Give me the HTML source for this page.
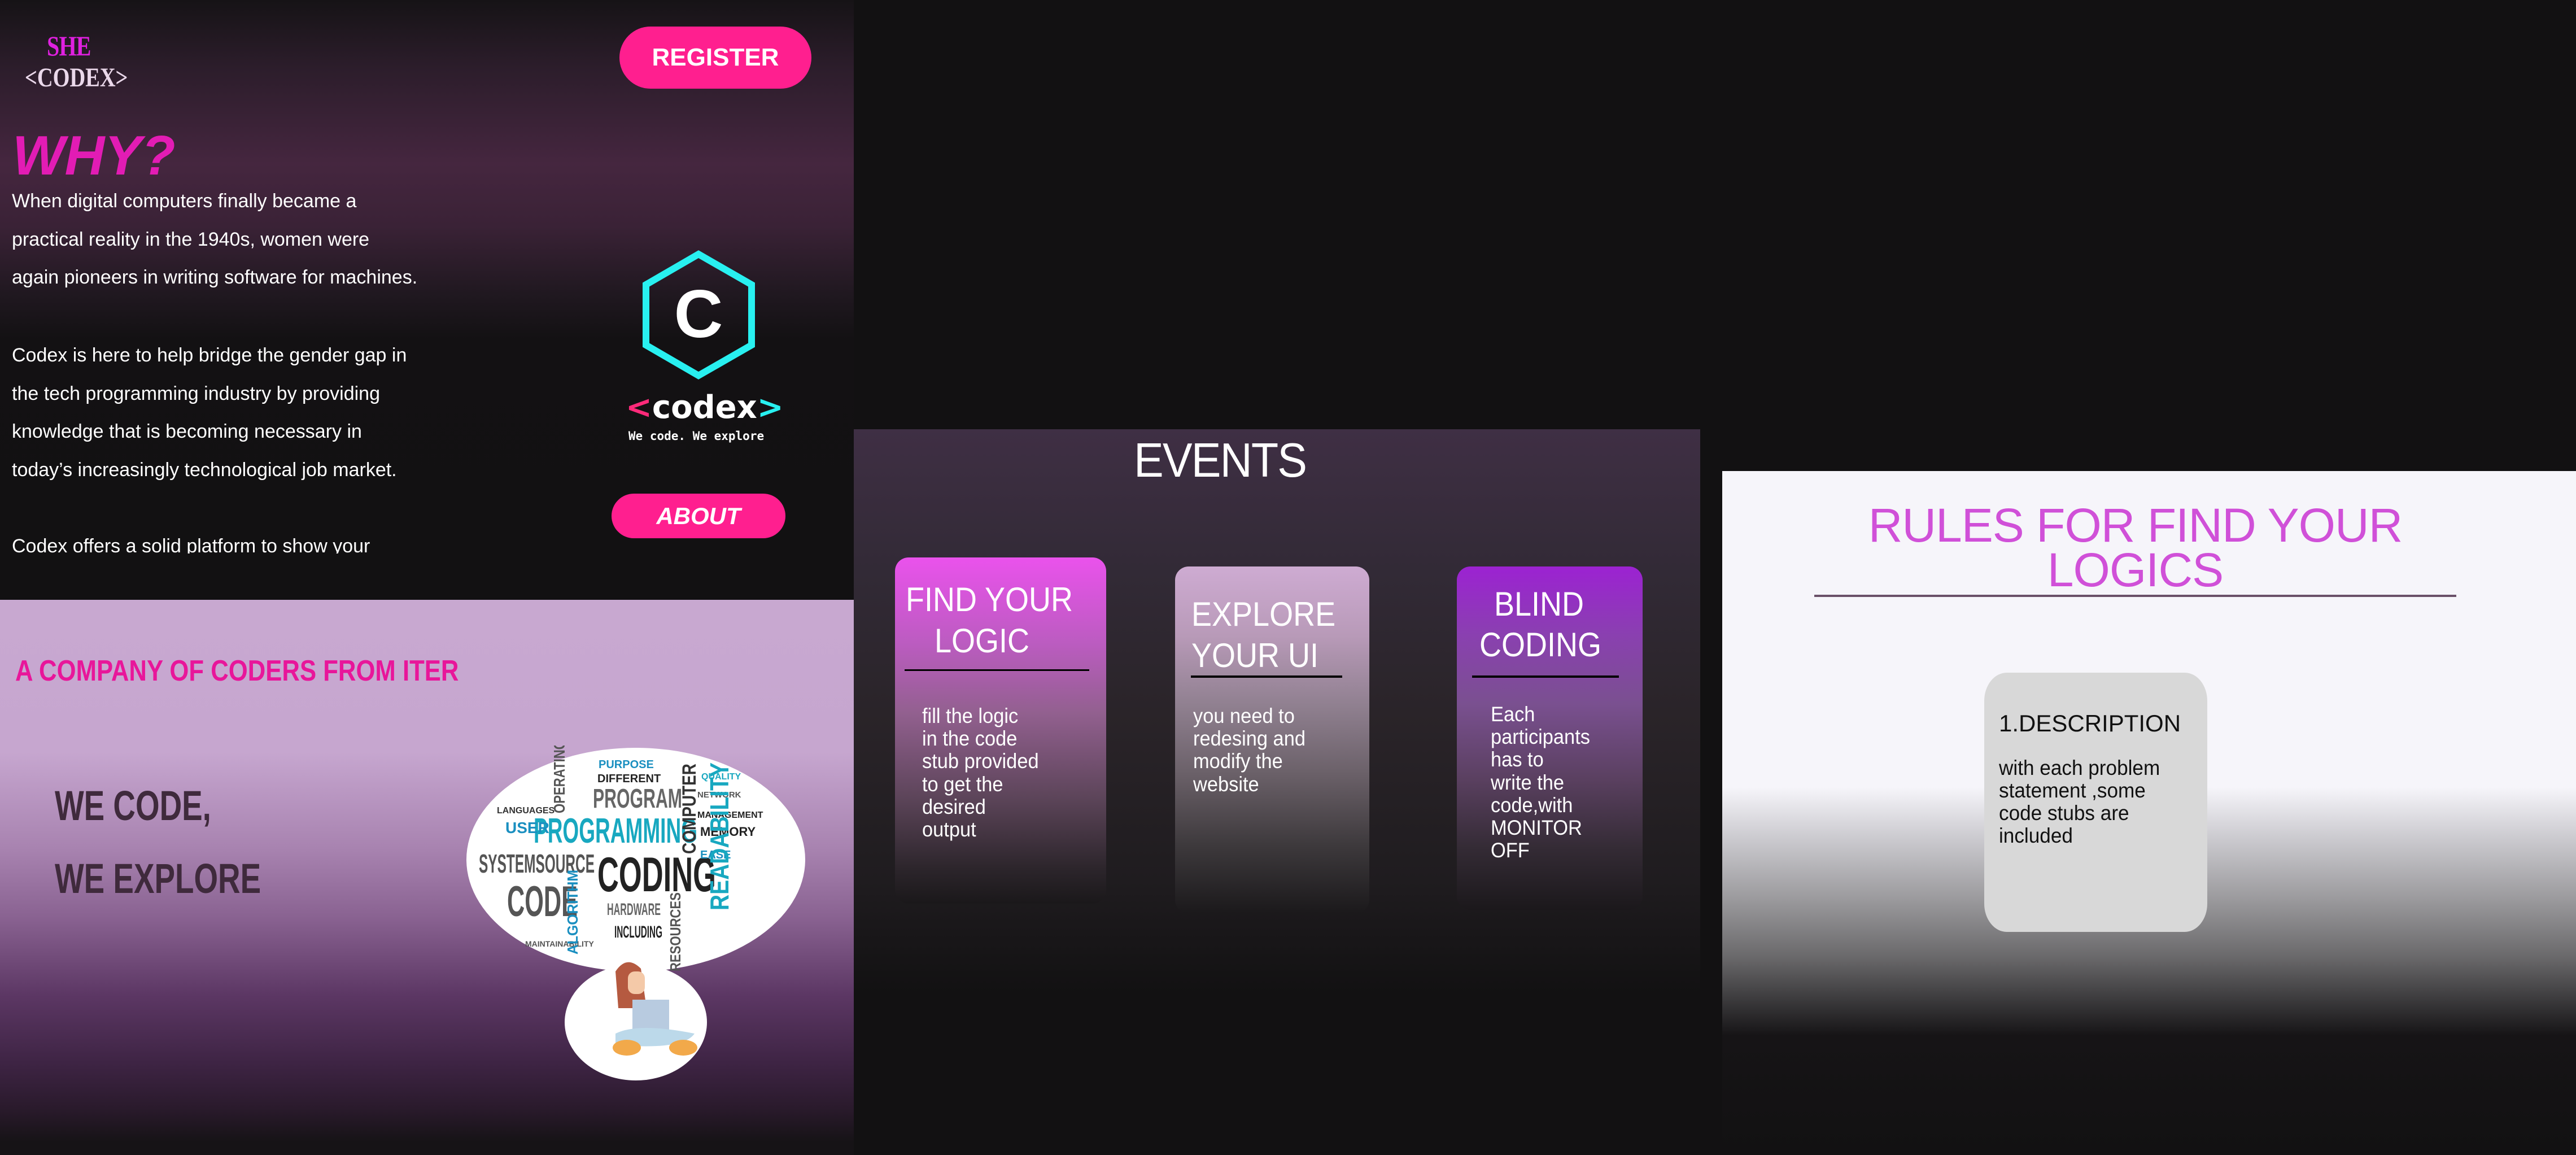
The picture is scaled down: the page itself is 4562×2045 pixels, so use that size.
<!DOCTYPE html>
<html><head><meta charset="utf-8"><style>
*{margin:0;padding:0;box-sizing:border-box}
body{width:4562px;height:2045px;background:#121112;position:relative;overflow:hidden;font-family:"Liberation Sans",sans-serif}
.a{position:absolute;white-space:nowrap}
#p1{position:absolute;left:0;top:0;width:1512px;height:1062px;background:linear-gradient(180deg,#161316 0px,#2c1d2b 120px,#45263f 290px,#3a2236 400px,#201820 520px,#131113 600px,#121112 1062px)}
#p2{position:absolute;left:0;top:1062px;width:1512px;height:983px;background:linear-gradient(180deg,#c8a8d0 0px,#c6a6cf 270px,#a883b0 440px,#8a6392 560px,#5c3764 700px,#3e2444 820px,#2a1a2c 900px,#161316 960px)}
#ev{position:absolute;left:1498px;top:760px;width:1513px;height:1285px;background:linear-gradient(180deg,#3f2f44 0px,#322a36 250px,#2a2429 500px,#1f1c1f 800px,#121112 1000px)}
#ru{position:absolute;left:3050px;top:834px;width:1512px;height:1211px;background:linear-gradient(180deg,#f6f5fa 0px,#f6f5fa 560px,#d0cfd4 640px,#9a999c 760px,#6a696b 860px,#333234 950px,#161416 1000px,#121112 1211px)}
.btn{position:absolute;background:#ff1f8f;border-radius:60px;color:#fff;font-weight:bold;text-align:center}
.pt{position:absolute;left:21px;color:#fff;font-size:34px;line-height:67.5px}
.card{position:absolute;border-radius:24px}
.ct{position:absolute;color:#fff;font-size:60px;line-height:60px;white-space:nowrap;transform:scaleX(.9);transform-origin:left top}
.cb{position:absolute;color:#fff;font-size:37px;line-height:40.2px;white-space:nowrap;transform:scaleX(.93);transform-origin:left top}
.ln{position:absolute;height:4px;background:#000}
</style></head><body>
<div id="ev"></div>
<div id="ru"></div>
<div id="p1"></div>
<div id="p2"></div>

<!-- panel 1 -->
<div class="a" style="left:83px;top:52px;font-family:'Liberation Serif',serif;font-weight:bold;font-size:50px;color:#e020e0;transform:scaleX(.8);transform-origin:left top;letter-spacing:-1px">SHE</div>
<div class="a" style="left:44px;top:110px;font-family:'Liberation Serif',serif;font-weight:bold;font-size:48px;color:#ead8ea;transform:scaleX(.8);transform-origin:left top">&lt;CODEX&gt;</div>
<div class="btn" style="left:1097px;top:47px;width:340px;height:110px;line-height:110px;font-size:44px">REGISTER</div>
<div class="a" style="left:22px;top:226px;font-size:98px;line-height:98px;font-weight:bold;font-style:italic;color:#e21cb4">WHY?</div>
<div style="position:absolute;left:0;top:300px;width:900px;height:680px;overflow:hidden">
<div class="pt" style="top:23px">When digital computers finally became a<br>practical reality in the 1940s, women were<br>again pioneers in writing software for machines.</div>
<div class="pt" style="top:296px">Codex is here to help bridge the gender gap in<br>the tech programming industry by providing<br>knowledge that is becoming necessary in<br>today’s increasingly technological job market.</div>
<div class="pt" style="top:634px">Codex offers a solid platform to show your</div>
</div>
<svg class="a" style="left:1120px;top:430px" width="240" height="260" viewBox="1120 430 240 260">
<polygon points="1237,450 1331,504 1331,611 1237,665 1144,611 1144,504" fill="none" stroke="#28f0f0" stroke-width="12"/>
<text x="1237" y="597" text-anchor="middle" font-family="Liberation Sans" font-weight="bold" font-size="120" fill="#fff">C</text>
</svg>
<div class="a" style="left:1108px;top:692px;width:262px;text-align:center;font-family:'DejaVu Sans',sans-serif;font-size:56px;line-height:60px;color:#fff;font-weight:bold"><span style="color:#ff2a7a">&lt;</span>codex<span style="color:#28f0f0">&gt;</span></div>
<div class="a" style="left:1104px;top:760px;width:258px;text-align:center;font-family:'DejaVu Sans Mono',monospace;font-size:21px;color:#fff;font-weight:bold">We code. We explore</div>
<div class="btn" style="left:1083px;top:874px;width:308px;height:79px;line-height:79px;font-size:42px;font-style:italic">ABOUT</div>

<!-- panel 2 -->
<div class="a" style="left:27px;top:1162px;font-size:52px;line-height:52px;font-weight:bold;color:#e8169a;transform:scaleX(.84);transform-origin:left top">A COMPANY OF CODERS FROM ITER</div>
<div class="a" style="left:97px;top:1390px;font-size:74px;line-height:74px;font-weight:bold;color:#3f2a3c;transform:scaleX(.74);transform-origin:left top">WE CODE,</div>
<div class="a" style="left:97px;top:1519px;font-size:74px;line-height:74px;font-weight:bold;color:#3f2a3c;transform:scaleX(.74);transform-origin:left top">WE EXPLORE</div>
<svg class="a" style="left:820px;top:1320px" width="620" height="600" viewBox="820 1320 620 600" font-family="Liberation Sans" font-weight="bold">
<ellipse cx="1126" cy="1522" rx="300" ry="198" fill="#fff"/>
<ellipse cx="1126" cy="1810" rx="126" ry="103" fill="#fff"/>
<text x="1050" y="1430" font-size="48" fill="#666" textLength="158" lengthAdjust="spacingAndGlyphs">PROGRAM</text>
<text x="945" y="1492" font-size="62" fill="#18a8c0" textLength="290" lengthAdjust="spacingAndGlyphs">PROGRAMMING</text>
<text x="1058" y="1578" font-size="86" fill="#222" textLength="210" lengthAdjust="spacingAndGlyphs">CODING</text>
<text x="848" y="1545" font-size="46" fill="#555" textLength="205" lengthAdjust="spacingAndGlyphs">SYSTEMSOURCE</text>
<text x="898" y="1622" font-size="76" fill="#555" textLength="125" lengthAdjust="spacingAndGlyphs">CODE</text>
<text x="1075" y="1620" font-size="30" fill="#666" textLength="95" lengthAdjust="spacingAndGlyphs">HARDWARE</text>
<text x="1088" y="1660" font-size="30" fill="#222" textLength="85" lengthAdjust="spacingAndGlyphs">INCLUDING</text>
<text x="895" y="1475" font-size="28" fill="#1a8fc0">USER</text>
<text x="1060" y="1360" font-size="20" fill="#1a8fc0">PURPOSE</text>
<text x="1058" y="1385" font-size="20" fill="#222">DIFFERENT</text>
<text x="880" y="1440" font-size="16" fill="#333">LANGUAGES</text>
<text x="1240" y="1480" font-size="22" fill="#222">MEMORY</text>
<text x="1240" y="1520" font-size="20" fill="#1a8fc0">EASE</text>
<text x="1235" y="1448" font-size="16" fill="#222">MANAGEMENT</text>
<text x="930" y="1676" font-size="14" fill="#555">MAINTAINABILITY</text>
<text x="1242" y="1380" font-size="16" fill="#1aa8c0">QUALITY</text>
<text x="1235" y="1412" font-size="15" fill="#555">NETWORK</text>
<text transform="translate(1290,1612) rotate(-90)" font-size="46" fill="#18a8c0" textLength="262" lengthAdjust="spacingAndGlyphs">READABILITY</text>
<text transform="translate(1232,1512) rotate(-90)" font-size="34" fill="#333" textLength="160" lengthAdjust="spacingAndGlyphs">COMPUTER</text>
<text transform="translate(1023,1690) rotate(-90)" font-size="26" fill="#1a8fc0" textLength="150" lengthAdjust="spacingAndGlyphs">ALGORITHM</text>
<text transform="translate(1205,1720) rotate(-90)" font-size="26" fill="#555" textLength="140" lengthAdjust="spacingAndGlyphs">RESOURCES</text>
<text transform="translate(1000,1440) rotate(-90)" font-size="28" fill="#555" textLength="130" lengthAdjust="spacingAndGlyphs">OPERATING</text>
<path d="M1090 1720 q20 -30 45 -5 l10 70 l-50 0 z" fill="#b55a40"/>
<rect x="1112" y="1720" width="30" height="40" rx="12" fill="#f4c9a8"/>
<rect x="1120" y="1770" width="65" height="55" fill="#b8cbe0"/>
<path d="M1090 1830 q40 -20 140 0 q-20 30 -140 20 z" fill="#bcd9ea"/>
<ellipse cx="1110" cy="1855" rx="25" ry="14" fill="#f2a94a"/>
<ellipse cx="1210" cy="1855" rx="25" ry="14" fill="#f2a94a"/>
</svg>

<!-- events -->
<div class="a" style="left:2008px;top:773px;font-size:85px;line-height:85px;color:#fff;letter-spacing:-2px;transform:scaleX(.93);transform-origin:left top">EVENTS</div>
<div class="card" style="left:1585px;top:987px;width:374px;height:613px;background:linear-gradient(180deg,#ea52ec 0%,#bb5cc0 25%,#92608f 45%,#5b4458 70%,#2c252b 90%,#1a181a 100%)"></div>
<div class="card" style="left:2081px;top:1003px;width:344px;height:614px;background:linear-gradient(180deg,#ceabd2 0%,#b89ab8 20%,#908090 40%,#6a6068 60%,#3e3a3d 80%,#1b191b 100%)"></div>
<div class="card" style="left:2580px;top:1003px;width:329px;height:608px;background:linear-gradient(180deg,#9c22d2 0%,#8a40b0 20%,#7a5090 40%,#5a4060 62%,#342b35 82%,#1b181b 100%)"></div>
<div class="ct" style="left:1604px;top:1032px">FIND YOUR</div>
<div class="ct" style="left:1655px;top:1105px">LOGIC</div>
<div class="ln" style="left:1602px;top:1185px;width:327px;height:3px"></div>
<div class="ct" style="left:2110px;top:1058px">EXPLORE</div>
<div class="ct" style="left:2110px;top:1131px">YOUR UI</div>
<div class="ln" style="left:2109px;top:1196px;width:268px"></div>
<div class="ct" style="left:2646px;top:1040px">BLIND</div>
<div class="ct" style="left:2620px;top:1112px">CODING</div>
<div class="ln" style="left:2607px;top:1196px;width:260px"></div>
<div class="cb" style="left:1633px;top:1248px">fill the logic<br>in the code<br>stub provided<br>to get the<br>desired<br>output</div>
<div class="cb" style="left:2113px;top:1248px">you need to<br>redesing and<br>modify the<br>website</div>
<div class="cb" style="left:2640px;top:1245px">Each<br>participants<br>has to<br>write the<br>code,with<br>MONITOR<br>OFF</div>

<!-- rules -->
<div class="a" style="left:3213px;top:891px;width:1137px;text-align:center;font-size:84px;line-height:79px;color:#d050d8;letter-spacing:-1px">RULES FOR FIND YOUR<br>LOGICS</div>
<div class="a" style="left:3213px;top:1053px;width:1137px;height:4px;background:#6a5068"></div>
<div class="a" style="left:3514px;top:1191px;width:395px;height:459px;background:#d8d8d8;border-radius:40px/50px"></div>
<div class="a" style="left:3540px;top:1260px;font-size:42px;line-height:42px;color:#111">1.DESCRIPTION</div>
<div class="a" style="left:3540px;top:1340px;font-size:37px;line-height:40px;color:#111;transform:scaleX(.95);transform-origin:left top">with each problem<br>statement ,some<br>code stubs are<br>included</div>
</body></html>
